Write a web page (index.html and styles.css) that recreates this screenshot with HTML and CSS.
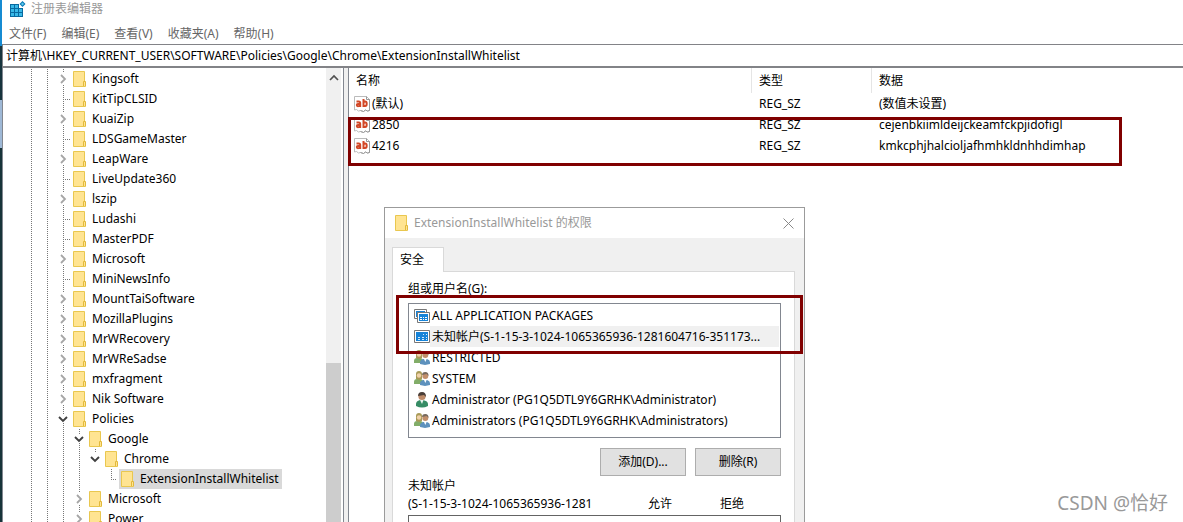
FILE: index.html
```
<!DOCTYPE html>
<html lang="zh-CN">
<head>
<meta charset="utf-8">
<title>注册表编辑器</title>
<link rel="stylesheet" href="styles.css">
</head>
<body>
<svg class="defs" aria-hidden="true">
  <symbol id="folder" viewBox="0 0 14 16"><path d="M.5.5h11v11h1v4H.5z" fill="#ffe492" stroke="#e9c74f"/><path d="M10.500 15V10.500h2V15" fill="#ffe492" stroke="#e2b93c"/></symbol>
  <symbol id="right" viewBox="0 0 8 10"><path d="M2 1l4 4-4 4" fill="none" stroke="#a6a6a6" stroke-width="1.800"/></symbol>
  <symbol id="down" viewBox="0 0 10 8"><path d="M1 2l4 4 4-4" fill="none" stroke="#404040" stroke-width="1.900"/></symbol>
  <symbol id="value" viewBox="0 0 16 16"><path d="M.5.5h12l3 3v11l-2 .5-2-1-2 1.500-3-1-2 .5-2-1.500-2 .5z" fill="#fff" stroke="#bbb"/><path d="M12.500.5v3h3v11l-2 .5-2-1-2 1.500-3-1" fill="none" stroke="#999"/><g fill="none" stroke="#d24726" stroke-width="2"><path d="M2.500 5.500h2.200q1.500 0 1.500 1.500v3.900M6 7.900H4Q2.800 7.900 2.800 9t1.200 1.200q1.200 0 2-.8M9.500 3v7.900M9.500 6.500q.7-1 1.600-1 1.600 0 1.600 2.300t-1.600 2.300q-.9 0-1.600-.8"/></g></symbol>
  <symbol id="tile" viewBox="0 0 16 14"><path d="M.5.5h15v12H.5z" fill="#fff" stroke="#777"/><path d="M2 2h12v9H2z" fill="#1683d8"/><path d="M4 7.500h2m2 0h2m2 0h1M4 9.500h2m2 0h2m2 0h1M9 4.500h1m2 0h1" stroke="#d5eafa"/></symbol>
  <symbol id="tiles" viewBox="0 0 16 14"><path d="M.5.5h12v9H.5z" fill="#fff" stroke="#777"/><path d="M2 2h9v6H2z" fill="#1683d8"/><path d="M3.500 3.500h12v10h-12z" fill="#fff" stroke="#777"/><path d="M5 5h9v7H5z" fill="#1683d8"/><path d="M6 8.500h2m1 0h1m1 0h2M6 10.500h2m1 0h1m1 0h2" stroke="#fff"/></symbol>
  <symbol id="users" viewBox="0 0 16 16"><path d="M0 13v-2q0-3 3-3h3q3 0 3 3v2z" fill="#82ad68"/><path d="M2 8V3q0-3 3-3t3 3v5L5 9z" fill="#a99a58"/><circle cx="5" cy="4.500" r="2.200" fill="#f1d1a9"/><path d="M6 14v-2q0-2 3-3h4q3 1 3 3v2l-5 1z" fill="#5d91bd"/><circle cx="11.300" cy="5" r="3" fill="#c28f6b"/><path d="M8 4q0-3 3.300-3t3.300 4l-2-2z" fill="#77695d"/><path d="M10 9l1.300 3 1.300-3z" fill="#fff"/></symbol>
  <symbol id="user" viewBox="0 0 16 16"><path d="M2 14v-2q0-3 4-4h3q5 1 5 4v2q-6 3-12 0z" fill="#368c65"/><circle cx="8" cy="4.500" r="3.600" fill="#bd8a68"/><path d="M4 4q0-4 4-4t4 5l-2-2z" fill="#4a3e38"/><path d="M6 8l2 4 1.500-4z" fill="#e9f4ee"/></symbol>
</svg>
<main class="window">
  <header class="titlebar">
    <svg class="app-icon" viewBox="0 0 16 16" aria-hidden="true"><path d="M0 3h13v13H0z" fill="#086aa0"/><path d="M1 4h3v3H1zM5 4h3v3H5zM1 8h3v3H1zM5 8h3v3H5zM9 8h3v3H9zM1 12h3v3H1zM5 12h3v3H5zM9 12h3v3H9z" fill="#39b9e8"/><path d="M9 0h7v7H9z" fill="#fff"/><path d="M12.500 0l3 3-3 3-3-3z" fill="#0879b5"/><path d="M12.500 1.500L14 3l-1.500 1.500L11 3z" fill="#5cc9ee"/></svg>
    <span>注册表编辑器</span>
  </header>
  <nav class="menu"><button>文件(F)</button><button>编辑(E)</button><button>查看(V)</button><button>收藏夹(A)</button><button>帮助(H)</button></nav>
  <input class="address" aria-label="地址" value="计算机\HKEY_CURRENT_USER\SOFTWARE\Policies\Google\Chrome\ExtensionInstallWhitelist">
  <div class="panes">
    <div class="tree-pane">
      <ul class="tree">
        <li><i></i><i></i><b><svg><use href="#right"/></svg></b><svg class="folder"><use href="#folder"/></svg><span>Kingsoft</span></li>
        <li><i></i><i></i><i class="leaf"></i><svg class="folder"><use href="#folder"/></svg><span>KitTipCLSID</span></li>
        <li><i></i><i></i><b><svg><use href="#right"/></svg></b><svg class="folder"><use href="#folder"/></svg><span>KuaiZip</span></li>
        <li><i></i><i></i><i class="leaf"></i><svg class="folder"><use href="#folder"/></svg><span>LDSGameMaster</span></li>
        <li><i></i><i></i><b><svg><use href="#right"/></svg></b><svg class="folder"><use href="#folder"/></svg><span>LeapWare</span></li>
        <li><i></i><i></i><i class="leaf"></i><svg class="folder"><use href="#folder"/></svg><span>LiveUpdate360</span></li>
        <li><i></i><i></i><b><svg><use href="#right"/></svg></b><svg class="folder"><use href="#folder"/></svg><span>lszip</span></li>
        <li><i></i><i></i><i class="leaf"></i><svg class="folder"><use href="#folder"/></svg><span>Ludashi</span></li>
        <li><i></i><i></i><i class="leaf"></i><svg class="folder"><use href="#folder"/></svg><span>MasterPDF</span></li>
        <li><i></i><i></i><b><svg><use href="#right"/></svg></b><svg class="folder"><use href="#folder"/></svg><span>Microsoft</span></li>
        <li><i></i><i></i><i class="leaf"></i><svg class="folder"><use href="#folder"/></svg><span>MiniNewsInfo</span></li>
        <li><i></i><i></i><b><svg><use href="#right"/></svg></b><svg class="folder"><use href="#folder"/></svg><span>MountTaiSoftware</span></li>
        <li><i></i><i></i><b><svg><use href="#right"/></svg></b><svg class="folder"><use href="#folder"/></svg><span>MozillaPlugins</span></li>
        <li><i></i><i></i><b><svg><use href="#right"/></svg></b><svg class="folder"><use href="#folder"/></svg><span>MrWRecovery</span></li>
        <li><i></i><i></i><b><svg><use href="#right"/></svg></b><svg class="folder"><use href="#folder"/></svg><span>MrWReSadse</span></li>
        <li><i></i><i></i><b><svg><use href="#right"/></svg></b><svg class="folder"><use href="#folder"/></svg><span>mxfragment</span></li>
        <li><i></i><i></i><b><svg><use href="#right"/></svg></b><svg class="folder"><use href="#folder"/></svg><span>Nik Software</span></li>
        <li><i></i><i></i><b><svg class="open"><use href="#down"/></svg></b><svg class="folder"><use href="#folder"/></svg><span>Policies</span></li>
        <li><i></i><i></i><i></i><b><svg class="open"><use href="#down"/></svg></b><svg class="folder"><use href="#folder"/></svg><span>Google</span></li>
        <li><i></i><i></i><i></i><i></i><b class="last"><svg class="open"><use href="#down"/></svg></b><svg class="folder"><use href="#folder"/></svg><span>Chrome</span></li>
        <li class="current"><i></i><i></i><i></i><i></i><i class="blank"></i><i class="leaf end"></i><span class="selected"><svg class="folder"><use href="#folder"/></svg><span>ExtensionInstallWhitelist</span></span></li>
        <li><i></i><i></i><i></i><b><svg><use href="#right"/></svg></b><svg class="folder"><use href="#folder"/></svg><span>Microsoft</span></li>
        <li><i></i><i></i><i></i><b><svg><use href="#right"/></svg></b><svg class="folder"><use href="#folder"/></svg><span>Power</span></li>
      </ul>
      <div class="scrollbar"><svg class="open" aria-hidden="true"><path d="M1 6l4-4 4 4" fill="none" stroke="#505050" stroke-width="1.700"/></svg><div class="thumb"></div></div>
    </div>
    <section class="values">
      <table>
        <colgroup><col class="name-col"><col class="type-col"><col></colgroup>
        <thead><tr><th>名称</th><th>类型</th><th>数据</th></tr></thead>
        <tbody>
          <tr><td><svg class="value-icon"><use href="#value"/></svg>(默认)</td><td>REG_SZ</td><td>(数值未设置)</td></tr>
          <tr><td><svg class="value-icon"><use href="#value"/></svg>2850</td><td>REG_SZ</td><td>cejenbkiimldeijckeamfckpjidofigl</td></tr>
          <tr><td><svg class="value-icon"><use href="#value"/></svg>4216</td><td>REG_SZ</td><td>kmkcphjhalcioljafhmhkldnhhdimhap</td></tr>
        </tbody>
      </table>
    </section>
  </div>
</main>
<section class="dialog" role="dialog" aria-labelledby="dialog-title">
  <header class="dialog-title"><svg class="folder"><use href="#folder"/></svg><span id="dialog-title">ExtensionInstallWhitelist 的权限</span><button class="close" aria-label="关闭"><svg viewBox="0 0 11 11"><path d="M.5.5l10 10M10.500.5l-10 10" stroke="#888" fill="none"/></svg></button></header>
  <div class="dialog-body">
    <button class="tab">安全</button>
    <div class="sheet">
      <div class="group-label" id="groups">组或用户名(G):</div>
      <ul class="accounts" aria-labelledby="groups">
        <li><svg><use href="#tiles"/></svg><span>ALL APPLICATION PACKAGES</span></li>
        <li><svg><use href="#tile"/></svg><span class="picked">未知帐户(S-1-15-3-1024-1065365936-1281604716-351173...</span></li>
        <li><svg><use href="#users"/></svg><span>RESTRICTED</span></li>
        <li><svg><use href="#users"/></svg><span>SYSTEM</span></li>
        <li><svg><use href="#user"/></svg><span>Administrator (PG1Q5DTL9Y6GRHK\Administrator)</span></li>
        <li><svg><use href="#users"/></svg><span>Administrators (PG1Q5DTL9Y6GRHK\Administrators)</span></li>
      </ul>
      <div class="actions"><button>添加(D)...</button><button>删除(R)</button></div>
      <div class="permissions-head"><div class="account">未知帐户<br>(S-1-15-3-1024-1065365936-1281604716</div><span>允许</span><span>拒绝</span></div>
      <div class="permissions"></div>
    </div>
  </div>
</section>
<div class="mark mark-values"></div>
<div class="mark mark-accounts"></div>
<div class="watermark">CSDN @恰好</div>
</body>
</html>
```
FILE: styles.css
```
* { box-sizing: border-box; }
body {
  margin: 0;
  height: 100vh;
  overflow: hidden;
  position: relative;
  padding-left: 2px;
  background: linear-gradient(#168bd2 0 46px, #17343d 46px 100px, #9eb8d6 100px 148px, #173339 148px);
  color: #000;
  font: 12px/20px "Noto Sans", "Noto Sans CJK SC", sans-serif;
}
button, input { font: inherit; color: inherit; }
ul { list-style: none; margin: 0; padding: 0; }
svg { flex: none; display: block; }
.defs { position: absolute; width: 0; height: 0; }
.window { height: 100%; background: #fff; display: flex; flex-direction: column; }
.titlebar { display: flex; align-items: center; gap: 5px; height: 18px; flex: none; padding-left: 8px; color: #999; }
.app-icon { width: 16px; height: 16px; }
.menu { display: flex; gap: 15px; height: 26px; flex: none; align-items: center; padding: 5px 0 0 7px; }
.menu button { border: 0; padding: 0; background: none; color: #666; }
.address { width: 100%; height: 24px; flex: none; margin: 0; padding: 0 3px 2px; border: solid #828387; border-width: 1px 0 2px 1px; outline: 0; background: #fff; }
.panes { display: flex; flex: 1; min-height: 0; background: #f0f0f0; gap: 4px; }
.tree-pane { display: flex; width: 342px; flex: none; overflow: hidden; background: #fff; border: solid #828790; border-width: 0 1px; padding-right: 2px; }
.tree { flex: 1; padding: 1px 0 0 20px; }
.tree li { display: flex; align-items: center; height: 20px; white-space: nowrap; }
.tree i, .tree b { width: 16px; height: 20px; flex: none; background: repeating-linear-gradient(#777 0 1px, transparent 1px 2px) 8px 0 / 1px 20px no-repeat; }
.tree .leaf { background: repeating-linear-gradient(#777 0 1px, transparent 1px 2px) 8px 0 / 1px 20px no-repeat, repeating-linear-gradient(90deg, #777 0 1px, transparent 1px 2px) 8px 10px / 8px 1px no-repeat; }
.tree .end { background-size: 1px 10px, 6px 1px; }
.tree .blank { background: none; }
.tree .last { background-size: 1px 4px; }
.tree b { display: grid; place-items: center; }
.tree b svg { width: 8px; height: 12px; padding: 1px 0; background: #fff; }
.folder { width: 14px; height: 16px; }
.tree li > .folder { margin: 0 5px 0 2px; }
.tree .open, .scrollbar .open { width: 10px; height: 8px; padding: 0; }
.selected { display: flex; align-items: center; gap: 5px; padding: 0 3px 0 2px; background: #d9d9d9; }
.scrollbar { width: 15px; display: flex; flex-direction: column; align-items: center; padding-top: 6px; background: #f0f0f0; }
.thumb { width: 100%; flex: 1; margin-top: 281px; background: #cdcdcd; }
.values { flex: 1; min-width: 0; background: #fff; border-left: 1px solid #828790; }
table { width: 100%; table-layout: fixed; border-collapse: collapse; }
.name-col { width: 404px; }
.type-col { width: 120px; }
th, td { height: 21px; padding: 0 6px; text-align: left; font-weight: 400; line-height: 20px; white-space: nowrap; }
th { height: 25px; background: linear-gradient(#e5e5e5, #e5e5e5) right 1px top 0 / 1px 100% no-repeat; }
th:first-child { padding-left: 7px; }
th:last-child { background: none; }
td:first-child { display: flex; align-items: center; gap: 2px; padding-left: 5px; }
.value-icon { width: 16px; height: 16px; }
.dialog { position: absolute; left: 384px; top: 207px; bottom: 0; width: 421px; overflow: hidden; border: solid #9b9b9b; border-width: 1px 1px 0; background: #f0f0f0; }
.dialog-title { display: flex; align-items: center; gap: 5px; height: 30px; padding: 0 10px; background: #fff; color: #999; }
.close { display: grid; place-items: center; width: 11px; height: 20px; margin-left: auto; border: 0; padding: 0; background: none; }
.close svg { width: 11px; height: 11px; }
.dialog-body { padding: 9px 9px 0 7px; }
.tab { position: relative; display: block; width: 52px; height: 25px; padding: 0 7px; text-align: left; border: 1px solid #d9d9d9; border-bottom: 0; background: #fff; margin-bottom: -1px; z-index: 1; }
.sheet { height: 300px; padding: 7px 13px 0 15px; background: #fff; border: 1px solid #d9d9d9; }
.group-label { height: 24px; }
.accounts { height: 135px; padding: 1px 1px 0 5px; border: 1px solid #828790; }
.accounts li { display: flex; height: 21px; align-items: center; white-space: nowrap; }
.accounts svg { width: 16px; height: 16px; }
.accounts span { flex: 1; padding-left: 2px; line-height: 21px; }
.accounts .picked { background: #f0f0f0; }
.actions { display: flex; justify-content: flex-end; gap: 9px; padding: 10px 0 0; }
.actions button { width: 86px; height: 28px; padding: 0; border: 1px solid #adadad; background: #e1e1e1; }
.permissions-head { display: flex; align-items: flex-end; height: 39px; line-height: 18px; padding-bottom: 2px; }
.account { width: 184px; overflow: hidden; white-space: nowrap; }
.permissions-head span { box-sizing: content-box; width: 16px; padding-left: 56px; white-space: nowrap; }
.permissions { height: 60px; border: 1px solid #646464; }
.mark { position: absolute; border: 3px solid #800000; }
.mark-values { left: 348px; top: 117px; width: 774px; height: 49px; }
.mark-accounts { left: 396px; top: 295px; width: 407px; height: 59px; }
.watermark { position: absolute; right: 15px; bottom: 5px; color: #999; font-size: 19px; line-height: 28px; }
```
